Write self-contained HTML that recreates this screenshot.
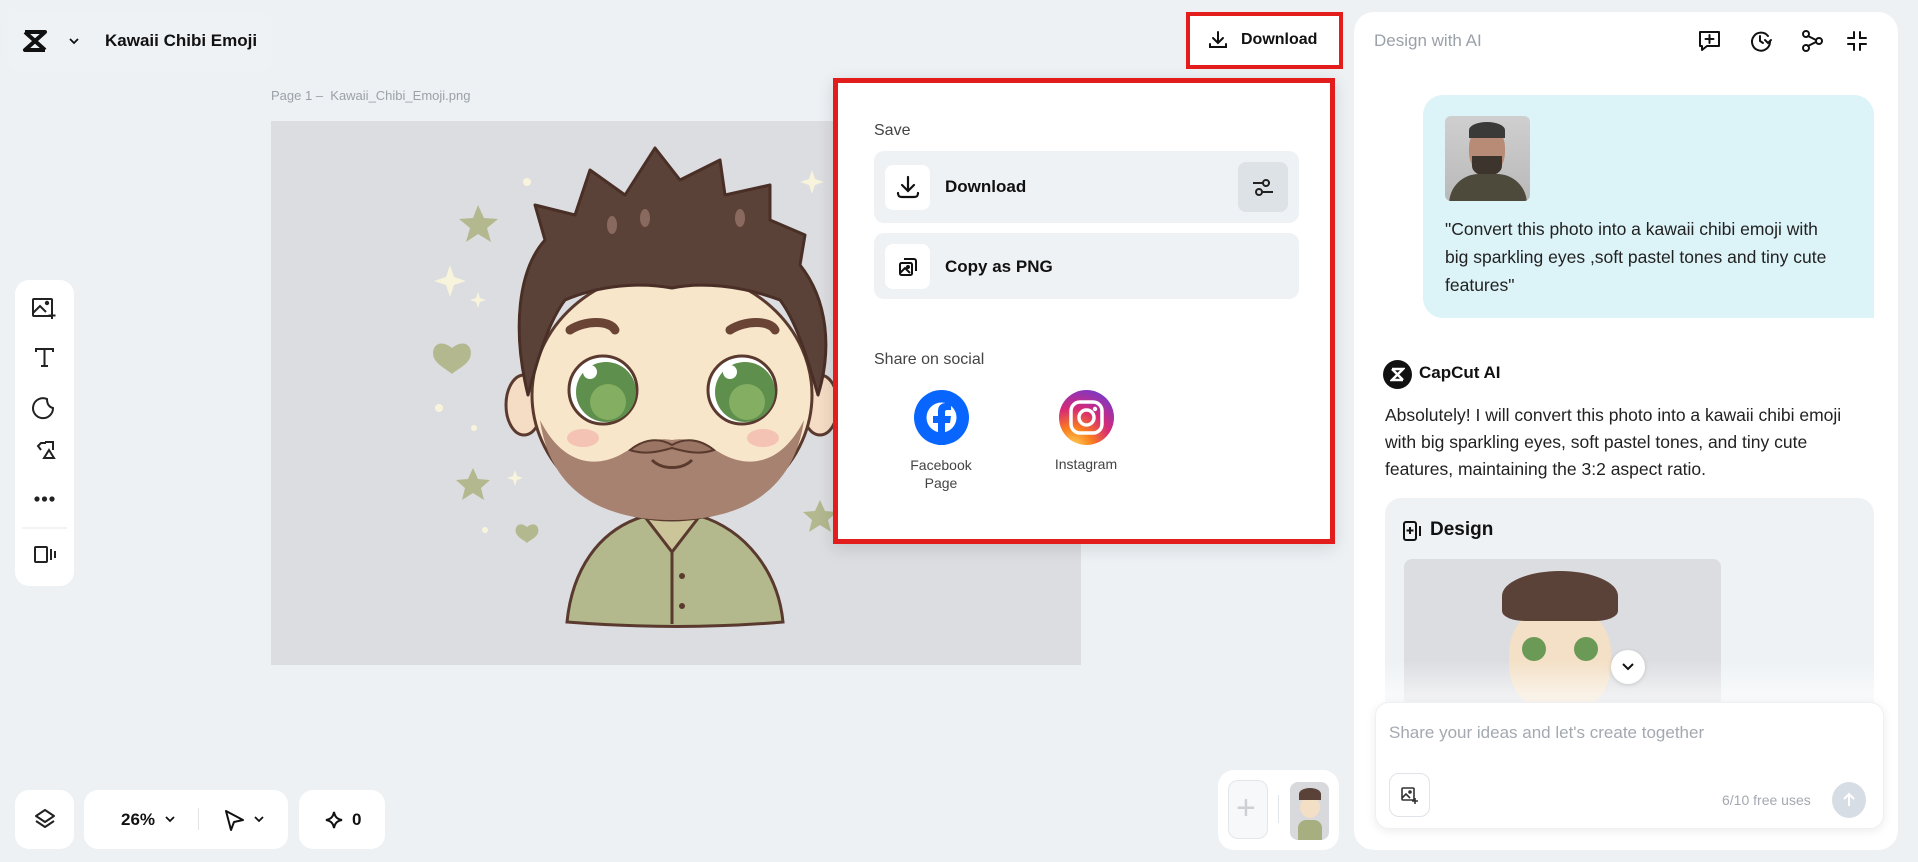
<!DOCTYPE html>
<html><head><meta charset="utf-8">
<style>
*{box-sizing:border-box;margin:0;padding:0}
body{width:1918px;height:862px;background:#edf1f4;font-family:"Liberation Sans",sans-serif;color:#111;position:relative;overflow:hidden}
.abs{position:absolute}
.card{position:absolute;background:#fff;border-radius:14px}
.t{position:absolute;white-space:nowrap}
svg{display:block}
</style></head><body>

<!-- title card -->
<div class="abs" style="left:7px;top:12px;width:265px;height:59px;background:#eef2f5;border-radius:12px"></div>
<svg class="abs" style="left:22px;top:29px" width="26" height="24" viewBox="0 0 26 24"><path d="M3 3h20L3 21h20M3 3l20 18" stroke="#111" stroke-width="4" fill="none" stroke-linejoin="round"/></svg>
<svg class="abs" style="left:68px;top:36px" width="12" height="10" viewBox="0 0 12 10"><path d="M2 3l4 4 4-4" stroke="#111" stroke-width="1.8" fill="none"/></svg>
<div class="t" style="left:105px;top:31px;font-size:17px;font-weight:bold">Kawaii Chibi Emoji</div>

<div class="t" style="left:271px;top:88px;font-size:13px;color:#9aa1a8">Page 1 –&nbsp; Kawaii_Chibi_Emoji.png</div>

<!-- canvas -->
<div class="abs" style="left:271px;top:121px;width:810px;height:544px;background:#dcdde1"></div>
<svg class="abs" style="left:271px;top:121px" width="810" height="544" viewBox="271 121 810 544">
 <g fill="#b3b88f">
  <path d="M478 205l6 13 14 1-11 9 4 14-13-8-12 8 4-14-11-9 14-1z"/>
  <path d="M473 468l5 11 12 1-9 8 3 12-11-7-11 7 3-12-9-8 12-1z"/>
  <path d="M452 348c-12-10-22-2-18 10 4 8 14 12 18 16 4-4 14-8 18-16 4-12-6-20-18-10z"/>
  <path d="M527 527c-7-6-13-1-11 6 2 5 8 7 11 10 3-3 9-5 11-10 2-7-4-12-11-6z"/>
  <path d="M820 500l5 11 12 1-9 8 3 12-11-7-11 7 3-12-9-8 12-1z"/>
 </g>
 <g fill="#f8f4dc">
  <path d="M450 265l4 12 12 4-12 4-4 12-4-12-12-4 12-4z"/>
  <path d="M812 170l3 9 9 3-9 3-3 9-3-9-9-3 9-3z"/>
  <path d="M478 292l2 6 6 2-6 2-2 6-2-6-6-2 6-2z"/>
  <path d="M515 470l2 6 6 2-6 2-2 6-2-6-6-2 6-2z"/>
  <circle cx="527" cy="182" r="4"/><circle cx="439" cy="408" r="4"/><circle cx="474" cy="428" r="3"/><circle cx="485" cy="530" r="3"/>
 </g>
 <path d="M567 622c5-50 30-92 78-106h55c45 14 78 55 83 106-70 6-140 6-216 0z" fill="#b3b98c" stroke="#5a3a2e" stroke-width="3"/>
 <path d="M645 517l27 35 27-35" fill="#ccc59a" stroke="#5a3a2e" stroke-width="3"/>
 <line x1="672" y1="552" x2="672" y2="624" stroke="#5a3a2e" stroke-width="3"/>
 <circle cx="682" cy="576" r="3" fill="#5a3a2e"/><circle cx="682" cy="606" r="3" fill="#5a3a2e"/>
 <ellipse cx="524" cy="405" rx="18" ry="30" fill="#f5dcc4" stroke="#5a3a2e" stroke-width="3"/>
 <ellipse cx="820" cy="405" rx="18" ry="30" fill="#f5dcc4" stroke="#5a3a2e" stroke-width="3"/>
 <ellipse cx="672" cy="395" rx="140" ry="125" fill="#f8e6cb" stroke="#5a3a2e" stroke-width="3"/>
 <path d="M540 420c10 70 60 100 132 100s122-30 132-100c-20 40-50 50-80 35-20-12-35-18-52-15-17-3-32 3-52 15-30 15-60 5-80-35z" fill="#a78270"/>
 <path d="M630 450c15-12 30-12 42-5 12-7 27-7 42 5-14 5-28 2-42-2-14 4-28 7-42 2z" fill="#9a7563" stroke="#5a3a2e" stroke-width="2"/>
 <path d="M652 460c10 10 30 10 40 0" stroke="#5a3a2e" stroke-width="3" fill="none"/>
 <path d="M528 395C512 330 518 270 545 240L535 205 575 215 590 170 625 195 655 148 680 180 720 160 725 195 770 185 770 220 805 235 800 265C828 300 832 350 818 395 805 350 795 320 780 300 740 285 700 282 672 288 640 282 600 285 565 300 550 320 540 350 528 395Z" fill="#5b4238" stroke="#4a2f26" stroke-width="3" stroke-linejoin="round"/>
 <g fill="#8a6a5e"><ellipse cx="612" cy="225" rx="5" ry="9"/><ellipse cx="645" cy="218" rx="5" ry="9"/><ellipse cx="740" cy="218" rx="5" ry="9"/></g>
 <path d="M570 330c15-10 40-10 45 0" stroke="#6a4535" stroke-width="9" stroke-linecap="round" fill="none"/>
 <path d="M730 330c15-10 40-10 45 0" stroke="#6a4535" stroke-width="9" stroke-linecap="round" fill="none"/>
 <circle cx="603" cy="390" r="34" fill="#fff" stroke="#5a3a2e" stroke-width="3"/>
 <circle cx="606" cy="392" r="30" fill="#5f8f4c"/>
 <circle cx="608" cy="402" r="18" fill="#94ba6c" opacity=".7"/>
 <circle cx="590" cy="372" r="7" fill="#fff"/>
 <circle cx="742" cy="390" r="34" fill="#fff" stroke="#5a3a2e" stroke-width="3"/>
 <circle cx="745" cy="392" r="30" fill="#5f8f4c"/>
 <circle cx="747" cy="402" r="18" fill="#94ba6c" opacity=".7"/>
 <circle cx="730" cy="372" r="7" fill="#fff"/>
 <ellipse cx="583" cy="438" rx="16" ry="9" fill="#f2b3a8" opacity=".7"/>
 <ellipse cx="763" cy="438" rx="16" ry="9" fill="#f2b3a8" opacity=".7"/>
</svg>

<!-- left toolbar -->
<div class="card" style="left:15px;top:280px;width:59px;height:306px;border-radius:14px"></div>
<svg class="abs" style="left:15px;top:280px" width="59" height="306" viewBox="0 0 59 306" fill="none" stroke="#222" stroke-width="2">
 <rect x="18" y="19" width="19" height="17" rx="1"/><path d="M18 33l7-7 6 6"/><circle cx="32" cy="23" r="1.2" fill="#222"/><path d="M37 32v7M33.5 35.5h7"/>
 <path d="M21 72v-3h17v3M29.5 69v17M26 86h7"/>
 <path d="M38 128a10 10 0 1 1-6-9c0 5 2 8 6 9z"/>
 <path d="M31 163h-5l-3 3 3 4M30 162h8v8M29 178l5-8 5 8z"/>
 <circle cx="22" cy="219" r="1.6" fill="#222"/><circle cx="29.5" cy="219" r="1.6" fill="#222"/><circle cx="37" cy="219" r="1.6" fill="#222"/>
 <path d="M7 248h45" stroke="#e5e7ea" stroke-width="1"/>
 <rect x="20" y="267" width="12" height="15" rx="1"/><path d="M36 269v11M40 271v7"/>
</svg>

<!-- bottom bar -->
<div class="card" style="left:15px;top:790px;width:59px;height:59px"></div>
<svg class="abs" style="left:33px;top:807px" width="24" height="24" viewBox="0 0 24 24" fill="none" stroke="#222" stroke-width="2" stroke-linejoin="round"><path d="M12 3l9 6-9 6-9-6z"/><path d="M3 14l9 6 9-6"/></svg>
<div class="card" style="left:84px;top:790px;width:204px;height:59px"></div>
<div class="t" style="left:121px;top:810px;font-size:17px;font-weight:bold">26%</div>
<svg class="abs" style="left:164px;top:814px" width="12" height="10" viewBox="0 0 12 10"><path d="M2 3l4 4 4-4" stroke="#111" stroke-width="1.8" fill="none"/></svg>
<div class="abs" style="left:198px;top:808px;width:1px;height:22px;background:#e2e5e8"></div>
<svg class="abs" style="left:223px;top:808px" width="24" height="24" viewBox="0 0 24 24"><path d="M3 3l17 9-9 2-3 8z" stroke="#111" stroke-width="2" fill="none" stroke-linejoin="round"/></svg>
<svg class="abs" style="left:253px;top:814px" width="12" height="10" viewBox="0 0 12 10"><path d="M2 3l4 4 4-4" stroke="#111" stroke-width="1.8" fill="none"/></svg>
<div class="card" style="left:299px;top:790px;width:86px;height:59px"></div>
<svg class="abs" style="left:324px;top:810px" width="20" height="20" viewBox="0 0 20 20"><path d="M10 2c1 5 3 7 8 8-5 1-7 3-8 8-1-5-3-7-8-8 5-1 7-3 8-8z" stroke="#111" stroke-width="2" fill="none"/></svg>
<div class="t" style="left:352px;top:810px;font-size:17px;font-weight:bold">0</div>

<!-- thumbnail bar -->
<div class="card" style="left:1218px;top:770px;width:121px;height:80px;border-radius:16px"></div>
<div class="abs" style="left:1228px;top:780px;width:40px;height:59px;border:1px solid #e3e6ea;border-radius:10px;background:#f7f8fa"></div>
<div class="t" style="left:1236px;top:789px;font-size:34px;color:#ccd0d5;font-weight:300">+</div>
<div class="abs" style="left:1278px;top:795px;width:1px;height:28px;background:#e2e5e8"></div>
<div class="abs" style="left:1290px;top:782px;width:39px;height:58px;border-radius:8px;background:#d8d9dc;overflow:hidden">
 <div class="abs" style="left:10px;top:14px;width:20px;height:22px;border-radius:50%;background:#f3dfc6"></div>
 <div class="abs" style="left:9px;top:6px;width:22px;height:12px;border-radius:50% 50% 0 0;background:#5b4238"></div>
 <div class="abs" style="left:8px;top:38px;width:24px;height:20px;background:#a7ae7f;border-radius:8px 8px 0 0"></div>
</div>

<!-- Download button -->
<div class="abs" style="left:1186px;top:12px;width:157px;height:57px;border:4px solid #e31c1c;background:#fff"></div>
<svg class="abs" style="left:1207px;top:29px" width="22" height="22" viewBox="0 0 22 22" fill="none" stroke="#111" stroke-width="2" stroke-linecap="round"><path d="M11 3v11M6 9l5 5 5-5M3 15v3h16v-3"/></svg>
<div class="t" style="left:1241px;top:31px;font-size:16px;font-weight:bold">Download</div>

<!-- Dropdown -->
<div class="abs" style="left:833px;top:78px;width:502px;height:466px;border:5px solid #e31c1c;background:#fff;box-shadow:0 4px 16px rgba(0,0,0,.12)"></div>
<div class="t" style="left:874px;top:122px;font-size:16px;color:#444">Save</div>
<div class="abs" style="left:874px;top:151px;width:425px;height:72px;border-radius:10px;background:#eef2f5"></div>
<div class="abs" style="left:885px;top:165px;width:45px;height:45px;border-radius:8px;background:#fff"></div>
<svg class="abs" style="left:895px;top:174px" width="26" height="26" viewBox="0 0 26 26" fill="none" stroke="#111" stroke-width="2.2" stroke-linecap="round"><path d="M13 3v14M7 11l6 6 6-6M3 19c0 3 1 4 4 4h12c3 0 4-1 4-4"/></svg>
<div class="t" style="left:945px;top:177px;font-size:17px;font-weight:bold">Download</div>
<div class="abs" style="left:1238px;top:162px;width:50px;height:50px;border-radius:8px;background:#dde2e7"></div>
<svg class="abs" style="left:1251px;top:175px" width="24" height="24" viewBox="0 0 24 24" fill="none" stroke="#222" stroke-width="2"><path d="M2 8h17M5 17h17"/><circle cx="15" cy="8" r="3" fill="#dde2e7"/><circle cx="8" cy="17" r="3" fill="#dde2e7"/></svg>
<div class="abs" style="left:874px;top:233px;width:425px;height:66px;border-radius:10px;background:#eef2f5"></div>
<div class="abs" style="left:885px;top:244px;width:45px;height:45px;border-radius:8px;background:#fff"></div>
<svg class="abs" style="left:897px;top:256px" width="22" height="22" viewBox="0 0 22 22" fill="none" stroke="#111" stroke-width="2"><rect x="3" y="7" width="12" height="12" rx="1.5"/><path d="M7 3h10a2 2 0 0 1 2 2v10M3 17l5-5 5 5"/><circle cx="11" cy="11" r="1" fill="#111"/></svg>
<div class="t" style="left:945px;top:257px;font-size:17px;font-weight:bold">Copy as PNG</div>
<div class="t" style="left:874px;top:351px;font-size:16px;color:#444">Share on social</div>
<svg class="abs" style="left:914px;top:390px" width="55" height="55" viewBox="0 0 55 55"><circle cx="27.5" cy="27.5" r="27.5" fill="#0866ff"/><circle cx="27.5" cy="27.5" r="15" fill="#fff"/><path d="M24 55V33h-5v-7h5v-5c0-5 3-8 8-8h5v7h-4c-1.5 0-2 1-2 2.5V26h6l-1 7h-5v22z" fill="#0866ff"/></svg>
<div class="t" style="left:941px;top:456px;font-size:14px;color:#444;text-align:center;transform:translateX(-50%);line-height:18px">Facebook<br>Page</div>
<svg class="abs" style="left:1059px;top:390px" width="55" height="55" viewBox="0 0 55 55"><defs><radialGradient id="ig" cx="0.25" cy="1.05" r="1.2"><stop offset="0" stop-color="#fdd85b"/><stop offset=".3" stop-color="#fa7e1e"/><stop offset=".6" stop-color="#d62976"/><stop offset="1" stop-color="#6a3bd6"/></radialGradient></defs><circle cx="27.5" cy="27.5" r="27.5" fill="url(#ig)"/><rect x="12" y="12" width="31" height="31" rx="9" fill="none" stroke="#fff" stroke-width="3.5"/><circle cx="27.5" cy="27.5" r="7.5" fill="none" stroke="#fff" stroke-width="3.5"/><circle cx="36" cy="19" r="2.2" fill="#fff"/></svg>
<div class="t" style="left:1086px;top:456px;font-size:14px;color:#444;transform:translateX(-50%)">Instagram</div>

<!-- right panel -->
<div class="abs" style="left:1354px;top:12px;width:544px;height:838px;background:#fff;border-radius:20px"></div>
<div class="t" style="left:1374px;top:31px;font-size:17px;color:#9aa1a8">Design with AI</div>
<svg class="abs" style="left:1697px;top:27px" width="180" height="28" viewBox="0 0 180 28" fill="none" stroke="#111" stroke-width="2" stroke-linecap="round">
 <path d="M3 5h19v14H10l-5 4v-4H3z" stroke-linejoin="round"/><path d="M12.5 8v8M8.5 12h8"/>
 <path d="M71 9a9 9 0 1 0 2 6"/><path d="M63 9v5l3 2M68 13l3 3 3-3"/>
 <circle cx="109" cy="7" r="3"/><circle cx="109" cy="21" r="3"/><circle cx="122" cy="14" r="3"/><path d="M111 9l8 4M111 19l8-4"/>
 <path d="M157 5v6h-6M163 5v6h6M157 23v-6h-6M163 23v-6h6"/>
</svg>
<div class="abs" style="left:1423px;top:95px;width:451px;height:223px;background:#dcf3f8;border-radius:20px 20px 0 20px"></div>
<div class="abs" style="left:1445px;top:116px;width:85px;height:85px;border-radius:6px;background:linear-gradient(#cfcfcf,#b9b9b9);overflow:hidden">
 <div class="abs" style="left:24px;top:10px;width:36px;height:48px;border-radius:45%;background:#b88b76"></div>
 <div class="abs" style="left:24px;top:6px;width:36px;height:16px;border-radius:50% 50% 0 0;background:#3a3a38"></div>
 <div class="abs" style="left:27px;top:40px;width:30px;height:20px;border-radius:0 0 50% 50%;background:#3e342e"></div>
 <div class="abs" style="left:4px;top:58px;width:78px;height:30px;border-radius:30px 30px 0 0;background:#4d4a3c"></div>
</div>
<div class="t" style="left:1445px;top:215px;font-size:17.5px;line-height:28px;color:#222">"Convert this photo into a kawaii chibi emoji with<br>big sparkling eyes ,soft pastel tones and tiny cute<br>features"</div>
<div class="abs" style="left:1383px;top:360px;width:29px;height:29px;border-radius:50%;background:#111"></div>
<svg class="abs" style="left:1390px;top:367px" width="15" height="15" viewBox="0 0 15 15"><path d="M2 2h11L2 13h11M2 2l11 11" stroke="#fff" stroke-width="2.5" fill="none"/></svg>
<div class="t" style="left:1419px;top:363px;font-size:17px;font-weight:bold">CapCut AI</div>
<div class="t" style="left:1385px;top:402px;font-size:17.5px;line-height:27px;color:#222">Absolutely! I will convert this photo into a kawaii chibi emoji<br>with big sparkling eyes, soft pastel tones, and tiny cute<br>features, maintaining the 3:2 aspect ratio.</div>
<div class="abs" style="left:1385px;top:498px;width:489px;height:240px;background:#eef2f5;border-radius:16px 16px 0 0"></div>
<svg class="abs" style="left:1402px;top:520px" width="20" height="22" viewBox="0 0 20 22" fill="none" stroke="#111" stroke-width="2"><rect x="2" y="2" width="12" height="18" rx="2"/><path d="M8 7v7M4.5 10.5h7M18 6v10"/></svg>
<div class="t" style="left:1430px;top:519px;font-size:19px;font-weight:bold">Design</div>
<div class="abs" style="left:1404px;top:559px;width:317px;height:160px;background:#dcdde1;border-radius:8px;overflow:hidden">
 <div class="abs" style="left:105px;top:45px;width:102px;height:110px;border-radius:45%;background:#f3e0c6"></div>
 <div class="abs" style="left:98px;top:12px;width:116px;height:50px;border-radius:50% 50% 20% 20%;background:#5b4238"></div>
 <div class="abs" style="left:118px;top:78px;width:24px;height:24px;border-radius:50%;background:#6a9a55"></div>
 <div class="abs" style="left:170px;top:78px;width:24px;height:24px;border-radius:50%;background:#6a9a55"></div>
</div>
<div class="abs" style="left:1375px;top:660px;width:510px;height:60px;background:linear-gradient(rgba(255,255,255,0),#fff)"></div>
<div class="abs" style="left:1611px;top:650px;width:34px;height:34px;border-radius:50%;background:#fff;box-shadow:0 1px 4px rgba(0,0,0,.15)"></div>
<svg class="abs" style="left:1621px;top:662px" width="14" height="10" viewBox="0 0 14 10"><path d="M2 2l5 5 5-5" stroke="#111" stroke-width="2" fill="none"/></svg>
<div class="abs" style="left:1375px;top:702px;width:509px;height:127px;background:#fff;border-radius:14px;box-shadow:0 2px 10px rgba(0,0,0,.08);border:1px solid #eef0f2"></div>
<div class="t" style="left:1389px;top:723px;font-size:17px;color:#a3a9b0">Share your ideas and let's create together</div>
<div class="abs" style="left:1389px;top:773px;width:41px;height:44px;border:1px solid #e0e3e7;border-radius:10px"></div>
<svg class="abs" style="left:1400px;top:786px" width="20" height="20" viewBox="0 0 20 20" fill="none" stroke="#333" stroke-width="1.6"><rect x="2" y="2" width="12" height="12" rx="1"/><path d="M2 12l4-4 4 4"/><circle cx="10" cy="6" r="1" fill="#333"/><path d="M15 12v6M12 15h6"/></svg>
<div class="t" style="left:1722px;top:792px;font-size:14px;color:#a3a9b0">6/10 free uses</div>
<div class="abs" style="left:1832px;top:782px;width:34px;height:36px;border-radius:50%;background:#d7dde4"></div>
<svg class="abs" style="left:1840px;top:791px" width="18" height="18" viewBox="0 0 18 18"><path d="M9 15V3M4 8l5-5 5 5" stroke="#fff" stroke-width="2" fill="none"/></svg>

</body></html>
